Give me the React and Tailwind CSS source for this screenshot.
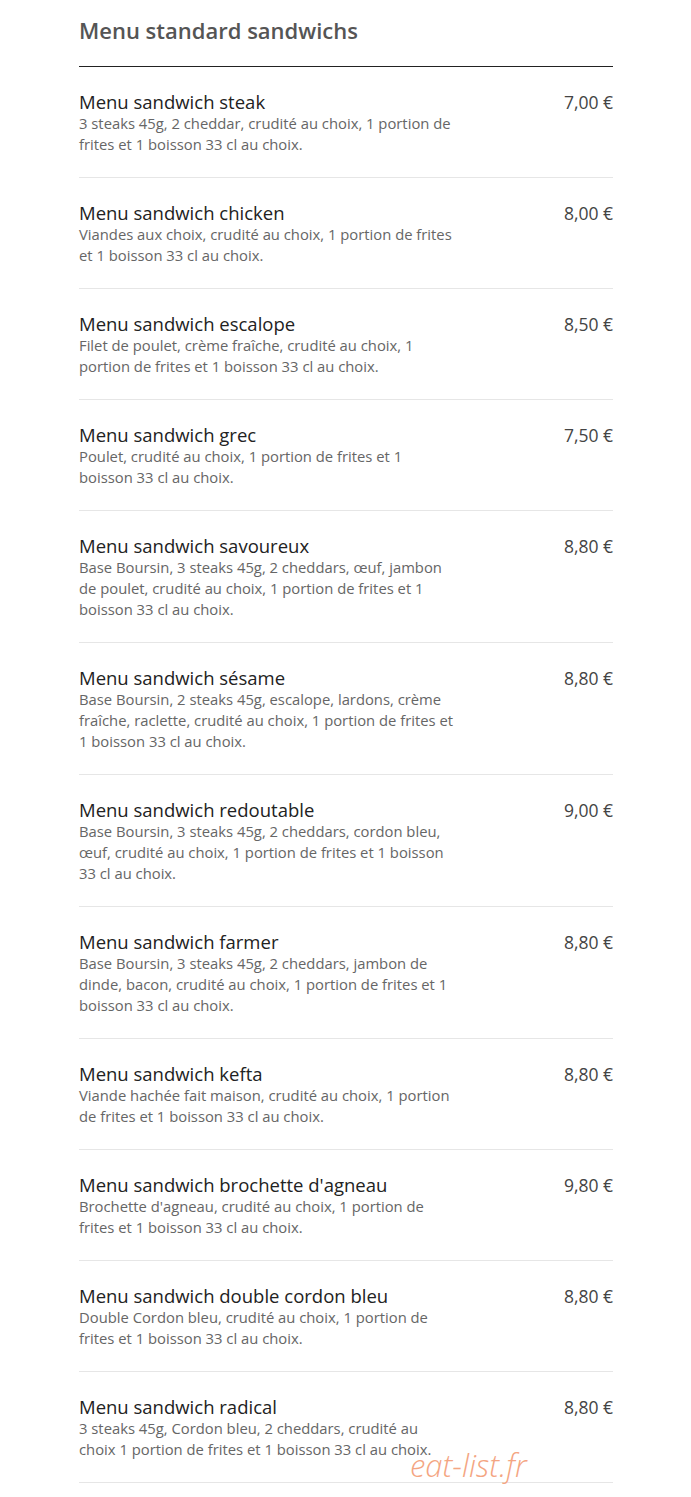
const items = [
    { name: "Menu sandwich steak", price: "7,00 €", desc: "3 steaks 45g, 2 cheddar, crudité au choix, 1 portion de frites et 1 boisson 33 cl au choix." },
    { name: "Menu sandwich chicken", price: "8,00 €", desc: "Viandes aux choix, crudité au choix, 1 portion de frites et 1 boisson 33 cl au choix." },
    { name: "Menu sandwich escalope", price: "8,50 €", desc: "Filet de poulet, crème fraîche, crudité au choix, 1 portion de frites et 1 boisson 33 cl au choix." },
    { name: "Menu sandwich grec", price: "7,50 €", desc: "Poulet, crudité au choix, 1 portion de frites et 1 boisson 33 cl au choix." },
    { name: "Menu sandwich savoureux", price: "8,80 €", desc: "Base Boursin, 3 steaks 45g, 2 cheddars, œuf, jambon de poulet, crudité au choix, 1 portion de frites et 1 boisson 33 cl au choix." },
    { name: "Menu sandwich sésame", price: "8,80 €", desc: "Base Boursin, 2 steaks 45g, escalope, lardons, crème fraîche, raclette, crudité au choix, 1 portion de frites et 1 boisson 33 cl au choix." },
    { name: "Menu sandwich redoutable", price: "9,00 €", desc: "Base Boursin, 3 steaks 45g, 2 cheddars, cordon bleu, œuf, crudité au choix, 1 portion de frites et 1 boisson 33 cl au choix." },
    { name: "Menu sandwich farmer", price: "8,80 €", desc: "Base Boursin, 3 steaks 45g, 2 cheddars, jambon de dinde, bacon, crudité au choix, 1 portion de frites et 1 boisson 33 cl au choix." },
    { name: "Menu sandwich kefta", price: "8,80 €", desc: "Viande hachée fait maison, crudité au choix, 1 portion de frites et 1 boisson 33 cl au choix." },
    { name: "Menu sandwich brochette d'agneau", price: "9,80 €", desc: "Brochette d'agneau, crudité au choix, 1 portion de frites et 1 boisson 33 cl au choix." },
    { name: "Menu sandwich double cordon bleu", price: "8,80 €", desc: "Double Cordon bleu, crudité au choix, 1 portion de frites et 1 boisson 33 cl au choix." },
    { name: "Menu sandwich radical", price: "8,80 €", desc: "3 steaks 45g, Cordon bleu, 2 cheddars, crudité au choix 1 portion de frites et 1 boisson 33 cl au choix." },
];

const MenuItem = ({ item }) => {
    return (
        <div className="flex justify-between border-b border-[#e6e6e6] pt-[24px] pb-[22px]">
            <div className="w-[376px]">
                <h3 className="text-[18.5px] leading-[22px] text-[#222]">{item.name}</h3>
                <p className="text-[14.8px] leading-[21px] text-[#666]">{item.desc}</p>
            </div>
            <span className="text-[17.5px] leading-[22px] text-[#444]">{item.price}</span>
        </div>
    );
};

const App = () => {
    return (
        <div className="bg-white min-h-screen font-['Open_Sans',sans-serif]">
            <div className="relative mx-[79px] w-[534px] pt-[16px]">
                <h1 className="text-[22px] leading-[28px] font-semibold text-[#555] pb-[22px] border-b border-[#222]">
                    Menu standard sandwichs
                </h1>
                {items.map((item) => (
                    <MenuItem key={item.name} item={item} />
                ))}
                <span className="absolute left-[331px] bottom-[-5px] text-[31px] italic font-light text-[#f4a582]">
                    eat-list.fr
                </span>
            </div>
        </div>
    );
};

export default App;
